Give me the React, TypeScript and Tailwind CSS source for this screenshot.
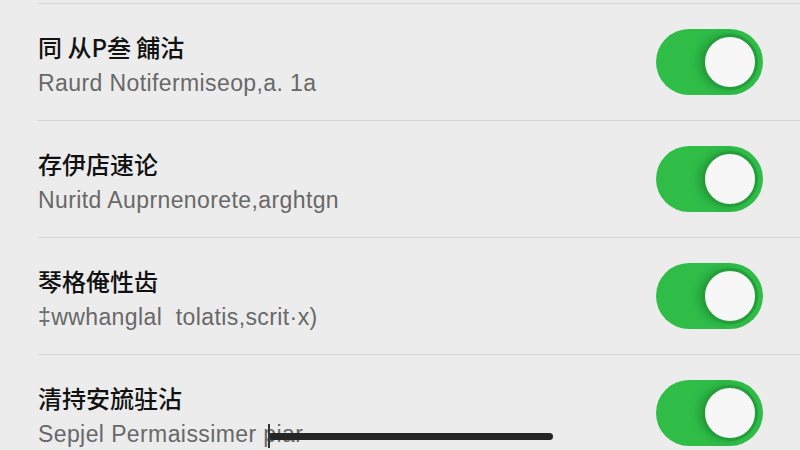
import React from "react";

type SettingRowProps = {
  title: string;
  subtitle: string;
  enabled: boolean;
};

const rows: SettingRowProps[] = [
  { title: "同 从P叁 餔沽", subtitle: "Raurd Notifermiseop,a. 1a", enabled: true },
  { title: "存伊店速论", subtitle: "Nuritd Auprnenorete,arghtgn", enabled: true },
  { title: "琴格俺性齿", subtitle: "‡wwhanglal  tolatis,scrit·x)", enabled: true },
  { title: "清持安旈驻沾", subtitle: "Sepjel Permaissimer piar", enabled: true },
];

const Toggle: React.FC<{ on: boolean }> = ({ on }) => (
  <div
    className={`relative w-[107px] h-[66px] rounded-full flex items-center ${
      on ? "bg-[#2fbd48] justify-end" : "bg-[#d9d9d9] justify-start"
    }`}>
    <div className="w-[56px] h-[56px] mr-[5px] rounded-full bg-[#f7f7f7] border-[3px] border-[#259d3b] shadow-[-5px_0_7px_rgba(0,80,20,0.22)]" />
  </div>
);

const SettingRow: React.FC<SettingRowProps> = ({ title, subtitle, enabled }) => (
  <div className="h-[117px] flex items-center border-b border-[#d5d5d5] pr-[37px]">
    <div className="flex-1 flex flex-col gap-[9px] pt-[5px]">
      <h2 className="text-[24px] leading-[28px] font-medium text-[#111] font-['Noto_Sans_CJK_SC',sans-serif]">
        {title}
      </h2>
      <p className="text-[23px] leading-[26px] tracking-[0.4px] text-[#686868] font-['Liberation_Sans',Arial,sans-serif] whitespace-pre">
        {subtitle}
      </p>
    </div>
    <Toggle on={enabled} />
  </div>
);

export default function App() {
  return (
    <main className="relative w-[800px] h-[450px] overflow-hidden bg-[#ececec]">
      <div className="pl-[38px] pt-[3px]">
        <div className="border-t border-[#d5d5d5]">
          {rows.map((row) => (
            <SettingRow key={row.title} {...row} />
          ))}
        </div>
      </div>

      {/* home indicator over the last row */}
      <div className="absolute left-[268px] top-[433px] w-[285px] h-[7px] rounded-full bg-[#252525]" />
      <div className="absolute left-[268px] top-[424px] w-[2px] h-[24px] bg-[#333]" />
    </main>
  );
}
